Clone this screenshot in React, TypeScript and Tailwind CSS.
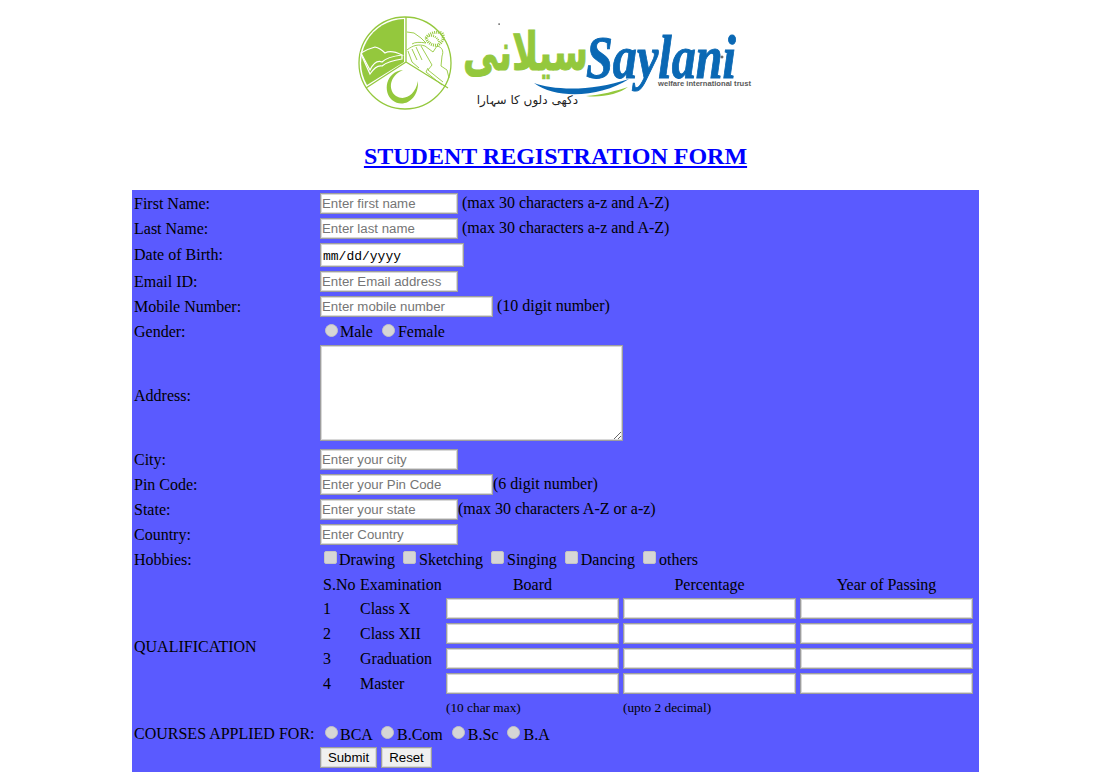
import React from "react";

const edge = "bg-white border border-[#9e9e9e] shadow-[inset_0_0_0_1px_#d8d8d8]";
const inputCls = `inline-block align-baseline ${edge} h-[21px] px-px text-[13.25px] leading-[17px] text-black placeholder:text-[#757575] [font-family:'Liberation_Sans',Arial,sans-serif] outline-none`;
const radioCls =
  "appearance-none inline-block w-[13px] h-[13px] rounded-full bg-[#d6d6d6] border border-[#c4c4c4] ml-[5px] mr-[3px] first:mr-[2px] mt-[3px] mb-0";
const courseCls =
  "appearance-none inline-block w-[13px] h-[13px] rounded-full bg-[#d6d6d6] border border-[#c4c4c4] ml-[5px] mr-[3px] first:mr-[2px] mt-[2px] mb-px";
const checkCls =
  "appearance-none inline-block w-[13px] h-[13px] rounded-[2px] bg-[#d6d6d6] border border-[#c4c4c4] ml-[4px] mr-[3px] first:mr-[2px] mt-[3px] mb-px";
const btnCls =
  "inline-block align-baseline h-[21px] bg-[#f0f0f0] border border-[#9e9e9e] shadow-[inset_0_0_0_1px_#d8d8d8] text-[13.25px] leading-[15px] text-black [font-family:'Liberation_Sans',Arial,sans-serif]";

function Logo() {
  const g = "#94c83d";
  const b = "#0a68b4";
  return (
    <svg viewBox="355 10 400 110" className="block w-[400px] h-[110px] mx-auto">
      <circle cx="404" cy="63" r="46" fill="white" stroke={g} strokeWidth="1.3" />
      <path d="M403 19 L403 62 L366 85 A44 44 0 0 1 403 19 Z" fill={g} />
      <path d="M405 17 L405 62 L447 88 M405 62 L365 88" fill="none" stroke={g} strokeWidth="1.3" />
      {/* book */}
      <path
        d="M360 53 C365 50 370 48 374 47 C379 48 382 51 384 53 C389 50 395 52 401 55 C393 56 385 58 381 62 C376 60 372 64 369 70 Z"
        fill="none"
        stroke="white"
        strokeWidth="1.2"
      />
      <path d="M360 54 L369 74 C373 68 377 65 381 66 C386 62 394 60 401 59 L401 55" fill="none" stroke="white" strokeWidth="1.2" />
      {/* hands and grain */}
      <g fill="none" stroke={g} strokeWidth="0.9">
        <path d="M406 32 L413 33 L420 38 L425 43 C419 42 414 42 411 44 M406 50 C412 45 418 44 424 46 L432 52 L436 46 C441 47 443 51 441 56 L440 66 L446 70 L448 78" />
        <path d="M407 51 L411 62 L418 68 M411 49 L416 60 M415 47 L421 60 M420 46 L427 58 L431 65 L427 70 L442 82 M427 68 L425 72 L441 85" />
        <path d="M425 38 C428 33 436 31 441 33 C444 37 441 43 437 45 C431 46 427 43 425 38 Z" strokeWidth="3" strokeDasharray="1 1" />
        <path d="M428 36 C433 35 437 38 438 42" strokeWidth="2" strokeDasharray="1 1" />
      </g>
      {/* crescent */}
      <path
        d="M402 70 C384 72 382 92 391 100 C402 109 418 100 417 81 C414 96 403 101 395 96 C387 90 388 76 402 70 Z"
        fill={g}
      />
      {/* urdu wordmark */}
      <g transform="translate(587 70) scale(0.68 1)">
        <text x="0" y="0" fontFamily="'DejaVu Sans',sans-serif" fontWeight="700" fontSize="52" fill={g} stroke={g} strokeWidth="1" direction="rtl">
          سیلانی
        </text>
      </g>
      {/* swooshes */}
      <path d="M533 83 C552 90 590 92 628 79 C600 97 556 100 533 83 Z" fill={b} />
      <path d="M585 96 C600 95 615 91 627 87 C618 94 600 98 585 96 Z" fill={g} />
      {/* latin wordmark */}
      <text x="585" y="78" fontFamily="'Liberation Serif',serif" fontStyle="italic" fontWeight="700" fontSize="62" fill={b} stroke={b} strokeWidth="1" textLength="150" lengthAdjust="spacingAndGlyphs">
        Saylani
      </text>
      <text x="657" y="86" fontFamily="'Liberation Sans',sans-serif" fontWeight="700" fontSize="8" fill="#5a5a5a" textLength="93" lengthAdjust="spacingAndGlyphs">
        welfare international trust
      </text>
      <text x="577" y="104" fontFamily="'DejaVu Sans',sans-serif" fontSize="12" fill="#222" direction="rtl">
        دکھی دلوں کا سہارا
      </text>
      <rect x="497.5" y="23.5" width="1.2" height="1.2" fill="black" />
      <path d="M721 55.5 V58.5 M719.5 57 H722.5" stroke="black" strokeWidth="0.7" />
    </svg>
  );
}

function Row({ label, h, cell, children }: { label: string; h: string; cell?: string; children: React.ReactNode }) {
  return (
    <tr className={h}>
      <td className="p-0 align-middle">{label}</td>
      <td className={`p-0 align-middle whitespace-nowrap ${cell ?? ""}`}>{children}</td>
    </tr>
  );
}

function Qualification() {
  const rows = [
    ["1", "Class X"],
    ["2", "Class XII"],
    ["3", "Graduation"],
    ["4", "Master"],
  ];
  const box = `${inputCls} w-[173px] block`;
  return (
    <table className="border-separate border-spacing-[2px] w-[656px] table-fixed">
      <colgroup>
        <col className="w-[35px]" />
        <col className="w-[84px]" />
        <col className="w-[175px]" />
        <col className="w-[175px]" />
        <col className="w-[175px]" />
      </colgroup>
      <tbody>
        <tr className="h-[20px]">
          <td className="p-px whitespace-nowrap">S.No</td>
          <td className="p-px whitespace-nowrap">Examination</td>
          <td className="p-px text-center">Board</td>
          <td className="p-px text-center">Percentage</td>
          <td className="p-px text-center">Year of Passing</td>
        </tr>
        {rows.map(([n, name]) => (
          <tr key={n} className="h-[23px]">
            <td className="p-px">{n}</td>
            <td className="p-px">{name}</td>
            <td className="p-px"><input className={box} /></td>
            <td className="p-px"><input className={box} /></td>
            <td className="p-px"><input className={box} /></td>
          </tr>
        ))}
        <tr className="h-[21px]">
          <td className="p-px" colSpan={2}></td>
          <td className="p-px text-[13.33px]">(10 char max)</td>
          <td className="p-px text-[13.33px]">(upto 2 decimal)</td>
          <td className="p-px"></td>
        </tr>
      </tbody>
    </table>
  );
}

export default function App() {
  return (
    <div className="w-[1111px] bg-white text-black text-[16px] leading-[18px] [font-family:'Liberation_Serif','Times_New_Roman',serif]">
      <div className="pt-[10px]">
        <Logo />
      </div>
      <h1 className="mt-[23px] mb-[20px] h-[27px] text-center text-[24px] leading-[27px] font-bold underline text-[#0000ff]">
        STUDENT REGISTRATION FORM
      </h1>
      <table className="mx-auto w-[847px] table-fixed border-separate border-spacing-[2px] bg-[#5a5aff]">
        <colgroup>
          <col className="w-[184px]" />
          <col />
        </colgroup>
        <tbody>
          <Row label="First Name:" h="h-[23px]">
            <input className={`${inputCls} w-[138px]`} placeholder="Enter first name" /> (max 30 characters a-z and A-Z)
          </Row>
          <Row label="Last Name:" h="h-[23px]">
            <input className={`${inputCls} w-[138px]`} placeholder="Enter last name" /> (max 30 characters a-z and A-Z)
          </Row>
          <Row label="Date of Birth:" h="h-[26px]">
            <input
              className={`inline-block align-middle ${edge} w-[144px] h-[24px] px-[2px] pt-[2px] text-[13px] text-black [font-family:'Liberation_Mono',monospace] outline-none`}
              defaultValue="mm/dd/yyyy"
              readOnly
            />
          </Row>
          <Row label="Email ID:" h="h-[23px]">
            <input className={`${inputCls} w-[138px]`} placeholder="Enter Email address" />
          </Row>
          <Row label="Mobile Number:" h="h-[23px]">
            <input className={`${inputCls} w-[173px]`} placeholder="Enter mobile number" /> (10 digit number)
          </Row>
          <Row label="Gender:" h="h-[23px]" cell="pb-[2px]">
            <input type="radio" name="g" className={radioCls} />Male{" "}
            <input type="radio" name="g" className={radioCls} />Female
          </Row>
          <Row label="Address:" h="h-[101px]">
            <textarea className={`block w-[303px] h-[96px] mb-[5px] ${edge} outline-none`} />
          </Row>
          <Row label="City:" h="h-[23px]">
            <input className={`${inputCls} w-[138px]`} placeholder="Enter your city" />
          </Row>
          <Row label="Pin Code:" h="h-[23px]">
            <input className={`${inputCls} w-[173px]`} placeholder="Enter your Pin Code" />(6 digit number)
          </Row>
          <Row label="State:" h="h-[23px]">
            <input className={`${inputCls} w-[138px]`} placeholder="Enter your state" />(max 30 characters A-Z or a-z)
          </Row>
          <Row label="Country:" h="h-[23px]">
            <input className={`${inputCls} w-[138px]`} placeholder="Enter Country" />
          </Row>
          <Row label="Hobbies:" h="h-[23px]" cell="pb-[2px]">
            <input type="checkbox" className={checkCls} />Drawing{" "}
            <input type="checkbox" className={checkCls} />Sketching{" "}
            <input type="checkbox" className={checkCls} />Singing{" "}
            <input type="checkbox" className={checkCls} />Dancing{" "}
            <input type="checkbox" className={checkCls} />others
          </Row>
          <Row label="QUALIFICATION" h="h-[147px]">
            <Qualification />
          </Row>
          <Row label="COURSES APPLIED FOR:" h="h-[23px]">
            <input type="radio" name="c" className={courseCls} />BCA{" "}
            <input type="radio" name="c" className={courseCls} />B.Com{" "}
            <input type="radio" name="c" className={courseCls} />B.Sc{" "}
            <input type="radio" name="c" className={courseCls} />B.A
          </Row>
          <tr className="h-[23px]">
            <td className="p-0"></td>
            <td className="p-0 align-top whitespace-nowrap">
              <button className={`${btnCls} w-[57px]`}>Submit</button>{" "}
              <button className={`${btnCls} w-[51px]`}>Reset</button>
            </td>
          </tr>
        </tbody>
      </table>
    </div>
  );
}
